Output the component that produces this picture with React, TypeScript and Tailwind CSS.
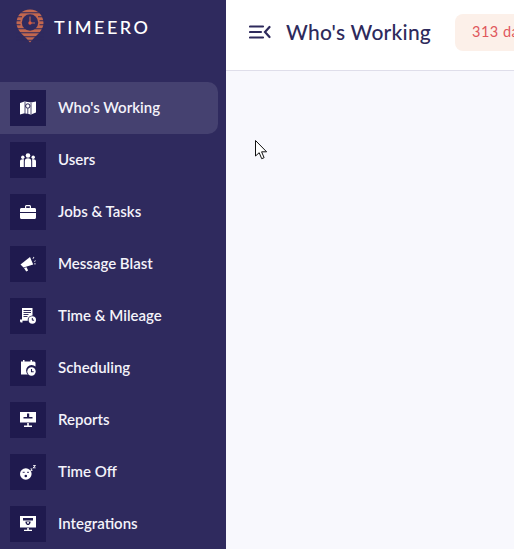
import type { ReactNode } from "react";

function MapIcon() {
  return (
    <svg width="16" height="14" viewBox="0 0 16 14">
      <path fill="#fff" d="M0 2 4.500.5 11 1.500 16 .5v11l-5 2-6.500-1.200L0 13.500z" />
      <circle cx="7.800" cy="5" r="2.200" fill="none" stroke="#1f1a4e" strokeWidth="1" />
      <path d="M7.800 7.500V13M5 1v11.500M11 2v11" stroke="#1f1a4e" strokeWidth=".8" />
    </svg>
  );
}

function UsersIcon() {
  return (
    <svg width="16" height="14" viewBox="0 0 16 14" fill="#fff">
      <circle cx="8" cy="2.500" r="2.300" />
      <circle cx="2.800" cy="4.200" r="1.700" />
      <circle cx="13.200" cy="4.200" r="1.700" />
      <path d="M4.800 14V8c0-1.800 1.300-2.800 3.200-2.800s3.200 1 3.200 2.800v6z" />
      <path d="M0 14V8.500C0 7 .9 6.300 2.800 6.300c.6 0 1 .1 1.300.3-.2.400-.3.900-.3 1.400v6zM16 14V8.500c0-1.500-.9-2.200-2.800-2.200-.6 0-1 .1-1.300.3.200.4.300.9.300 1.400v6z" />
    </svg>
  );
}

function CaseIcon() {
  return (
    <svg width="16" height="14" viewBox="0 0 16 14" fill="#fff">
      <path fillRule="evenodd" d="M5 3V1.500C5 .7 5.700 0 6.500 0h3c.8 0 1.500.7 1.500 1.500V3h3.500C15.400 3 16 3.600 16 4.500V7H0V4.500C0 3.600.6 3 1.500 3zm1.200 0h3.600V1.300H6.200z" />
      <path d="M0 8h16v4.500c0 .9-.6 1.500-1.500 1.500h-13C.6 14 0 13.400 0 12.500z" />
    </svg>
  );
}

function MegaphoneIcon() {
  return (
    <svg width="16" height="16" viewBox="0 0 16 16" fill="#fff">
      <path d="M10 1 13.200 8.500 3.500 11.500 .5 8.500z" />
      <path d="M4 12l2.500-.7 1.600 3.200-1.900 1z" />
      <path d="M12.500 2.500l1.300-1.700.6.500-1.300 1.700zM14 5l1.800-.6.2.7-1.800.6zM14 7.500h1.800v.7H14z" />
    </svg>
  );
}

function TimesheetIcon() {
  return (
    <svg width="16" height="16" viewBox="0 0 16 16" fill="#fff">
      <path d="M2 0h10.500v7.500a4.600 4.600 0 0 0-4.800 5.300H2z" />
      <path d="M3.500 2.500h7.500M3.500 4.500h7.500M3.500 6.500h5M3.500 8.500h4" stroke="#1f1a4e" strokeWidth=".9" />
      <path d="M0 11.500h2.500v3h-1A1.500 1.500 0 0 1 0 13z" />
      <circle cx="12.300" cy="12" r="3.700" />
      <path d="M12.300 10v2.200h1.800" stroke="#1f1a4e" strokeWidth="1" fill="none" />
    </svg>
  );
}

function CalendarIcon() {
  return (
    <svg width="16" height="16" viewBox="0 0 16 16" fill="#fff">
      <path d="M1 1.500h2V0h1.500v1.500h6V0H12v1.500h2A1.500 1.500 0 0 1 15.500 3v3.500a5.500 5.500 0 0 0-7.700 8H1z" />
      <circle cx="11.500" cy="11.500" r="4.200" />
      <path d="M11.500 9v2.700h2.200" stroke="#1f1a4e" strokeWidth="1.100" fill="none" />
    </svg>
  );
}

function ReportIcon() {
  return (
    <svg width="16" height="16" viewBox="0 0 16 16" fill="#fff">
      <rect x="0" y="0" width="16" height="10.500" />
      <path d="M7 1.500h2.200v3.600H12.500v1.500H3.500V5.100H7z" fill="#1f1a4e" />
      <path d="M7.200 11h1.600v2.500H12V15H4v-1.500h3.200z" />
    </svg>
  );
}

function SleepIcon() {
  return (
    <svg width="16" height="16" viewBox="0 0 16 16" fill="#fff">
      <circle cx="5.800" cy="10" r="5.800" />
      <path d="M2.700 8.300h2M7 8.300h2" stroke="#1f1a4e" strokeWidth=".9" />
      <circle cx="5.800" cy="12" r="1.300" fill="#1f1a4e" />
      <path d="M10.500 4.500h2v.6l-1.100 1.200h1.100V7h-2.100v-.6l1.100-1.200h-1zM13 1h2.700v.7l-1.600 1.800h1.600v.7H13v-.7l1.600-1.800H13z" />
    </svg>
  );
}

function MonitorIcon() {
  return (
    <svg width="16" height="16" viewBox="0 0 16 16" fill="#fff">
      <rect width="16" height="11.500" />
      <path d="M3 2h10v2.500H3zM5.500 5.500h5V7L9 9H7L5.500 7z" fill="#1f1a4e" />
      <circle cx="8" cy="6.700" r="1" />
      <path d="M7.200 12h1.600v1.700H12V15H4v-1.300h3.200z" />
    </svg>
  );
}

function Logo() {
  return (
    <svg width="28" height="34" viewBox="0 0 28 34">
      <path
        d="M14 .5C6.300.5.500 6.300.500 14c0 7.200 7.500 13 9.500 15l4 4.500 4-4.500c2-2 9.500-7.800 9.500-15C27.500 6.300 21.700.5 14 .5z"
        fill="#c2674f"
      />
      <path d="M0 3.700h28M0 7.700h6M22 7.700h6M0 11.700h4.500M23.500 11.700h4.500M0 15.700h4.500M23.500 15.700h4.500M0 19.700h28M0 23.700h28M0 27.700h28M0 31.200h28" stroke="#2f2a5e" strokeWidth="1.100" />
      <circle cx="14" cy="13.500" r="8.200" fill="#2f2a5e" />
      <path d="M14 7.500v6.500h5" fill="none" stroke="#c2674f" strokeWidth="1.100" />
      <circle cx="14" cy="14" r="1.700" fill="#dc5a41" />
    </svg>
  );
}

function MenuToggle() {
  return (
    <svg className="shrink-0" width="22" height="14" viewBox="0 0 22 14" fill="none" stroke="#2e2a5c" strokeWidth="2.200" strokeLinecap="round">
      <path d="M1 1.500h13M1 7h11M1 12.500h13M20.500 2 16 7l4.500 5" />
    </svg>
  );
}

function Cursor() {
  return (
    <svg className="absolute left-[29px] top-[69px]" width="14" height="20" viewBox="0 0 14 20">
      <path d="M.5.500v15.500l3.700-3.300 2.500 6 2.400-1-2.500-5.900h5z" fill="#fff" stroke="#111" strokeWidth="1" strokeLinejoin="round" />
    </svg>
  );
}

const items: { label: string; icon: ReactNode; active?: boolean }[] = [
  { label: "Who's Working", icon: <MapIcon />, active: true },
  { label: "Users", icon: <UsersIcon /> },
  { label: "Jobs & Tasks", icon: <CaseIcon /> },
  { label: "Message Blast", icon: <MegaphoneIcon /> },
  { label: "Time & Mileage", icon: <TimesheetIcon /> },
  { label: "Scheduling", icon: <CalendarIcon /> },
  { label: "Reports", icon: <ReportIcon /> },
  { label: "Time Off", icon: <SleepIcon /> },
  { label: "Integrations", icon: <MonitorIcon /> },
];

export default function App() {
  return (
    <div className="flex h-[549px] w-[514px] overflow-hidden font-['Lato','Noto_Sans',sans-serif]">
      <aside className="w-[226px] shrink-0 bg-[#2f2a5e]">
        <div className="flex h-[82px] items-start gap-[10px] pl-[16px] pt-[9px]">
          <Logo />
          <span className="pt-[6px] text-[18px] leading-[24px] font-medium tracking-[2.500px] text-white">TIMEERO</span>
        </div>
        <nav className="flex flex-col">
          {items.map((item) => (
            <a
              key={item.label}
              className={`flex h-[52px] w-[218px] items-center gap-[12px] rounded-r-[10px] pl-[10px] ${item.active ? "bg-[#454170]" : ""}`}
            >
              <span className="flex size-[36px] items-center justify-center bg-[#1f1a4e]">{item.icon}</span>
              <span className="pb-[2px] text-[15px] font-semibold text-[#f4f3fa]">{item.label}</span>
            </a>
          ))}
        </nav>
      </aside>
      <div className="flex min-w-0 flex-1 flex-col bg-[#f8f8fd]">
        <header className="flex h-[71px] shrink-0 items-center overflow-hidden border-b border-[#dfdeea] bg-white pb-[6px] pl-[23px]">
          <MenuToggle />
          <h1 className="ml-[15px] shrink-0 text-[21px] font-medium whitespace-nowrap tracking-[0.220px] text-[#2e2a5c]">Who's Working</h1>
          <div className="ml-[24px] flex h-[37px] shrink-0 items-center rounded-l-[8px] bg-[#fcf0e9] px-[17px] text-[14.500px] tracking-[0.500px] whitespace-nowrap text-[#e0575b]">
            313 days
          </div>
        </header>
        <main className="relative flex-1">
          <Cursor />
        </main>
      </div>
    </div>
  );
}
